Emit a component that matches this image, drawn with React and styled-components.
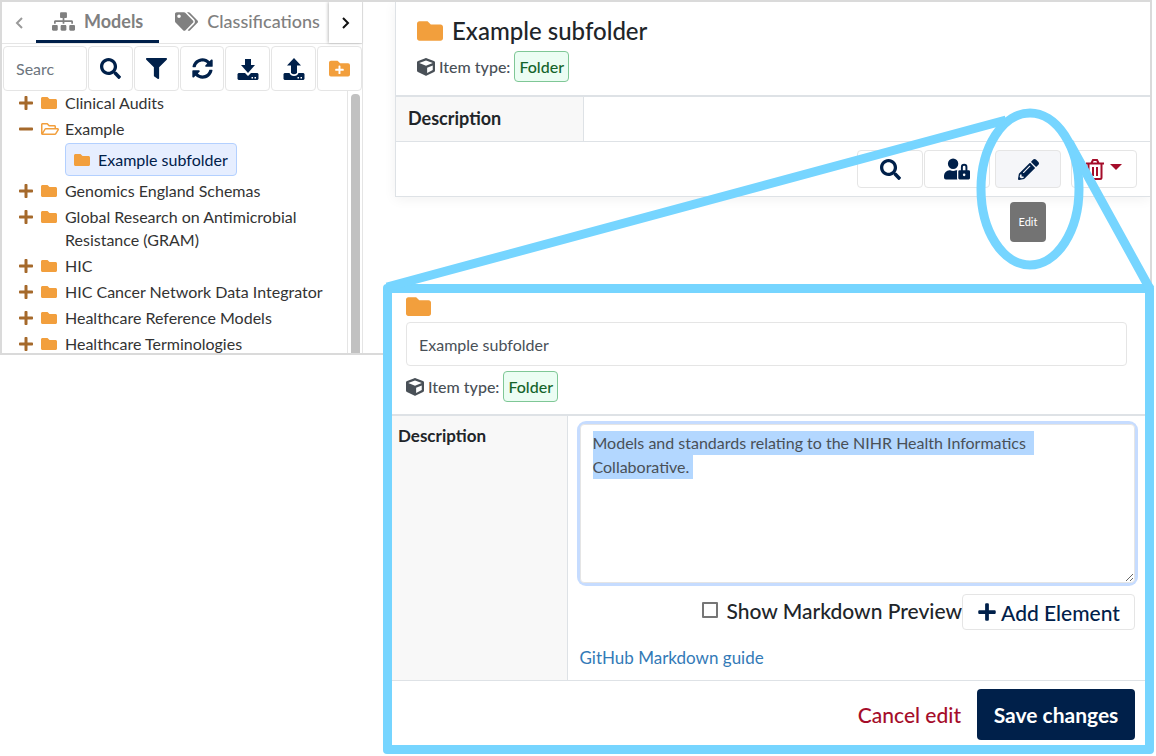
import React from "react";
import styled, { createGlobalStyle, css } from "styled-components";
import {
  FaSitemap, FaTags, FaSearch, FaFilter, FaSyncAlt, FaFolderPlus, FaFolder,
  FaRegFolderOpen, FaCube, FaUserLock, FaPencilAlt, FaPlus, FaMinus,
} from "react-icons/fa";

const c = {
  navy: "#00204a", orange: "#f29f3d", brown: "#a5692b", red: "#a50d2a",
  line: "#dee2e6", soft: "#e5e5e5", sky: "#76d5ff", text: "#333", grey: "#808080",
};

const Global = createGlobalStyle`
  *, *::before, *::after { box-sizing: border-box; }
  body { margin: 0; background: #fff; color: ${c.text}; font: 16px/23px Lato, "Open Sans", sans-serif; }
  button, input, textarea { font: inherit; color: inherit; }
  button { cursor: pointer; padding: 0; }
  h1, h2, p, ul, table { margin: 0; padding: 0; }
  svg { flex: none; }
`;

const Page = styled.main`
  position: relative;
  display: grid;
  grid-template-columns: 383px 1fr;
  grid-template-rows: 284px 71px auto;
  padding-right: 2px;
`;
const Frame = styled.div`
  grid-area: 1 / 1 / 3 / 3;
  display: flex;
  margin-right: 2px;
  border: 2px solid #dadada;
  overflow: hidden;
`;

const Sidebar = styled.aside`
  width: 361px;
  border-right: 1px solid ${c.soft};
  display: flex;
  flex-direction: column;
`;
const Tabs = styled.div`
  display: flex;
  height: 42px;
  border-bottom: 1px solid ${c.soft};
`;
const Pager = styled.button`
  flex: none;
  width: ${(p) => (p.$raised ? 33 : 34)}px;
  margin-left: ${(p) => (p.$raised ? "auto" : 0)};
  border: 0;
  background: #fff;
  display: flex;
  align-items: center;
  justify-content: center;
  box-shadow: ${(p) => (p.$raised ? "-1px 0 3px rgba(0,0,0,.25)" : "none")};
`;
const Tab = styled.button`
  flex: none;
  display: flex;
  align-items: center;
  gap: 9px;
  padding: 0 16px;
  margin-right: ${(p) => (p.$active ? 0 : -16)}px;
  border: 0;
  border-bottom: 3px solid ${(p) => (p.$active ? c.navy : "transparent")};
  background: none;
  color: ${c.grey};
  font-size: 18px;
  font-weight: ${(p) => (p.$active ? 700 : 500)};
`;
const SearchRow = styled.div`
  display: flex;
  gap: 1px;
  padding: 2px 0 0 1px;
`;
const box = css`
  border: 1px solid ${c.soft};
  border-radius: 4px;
  background: #fff;
`;
const SearchInput = styled.input`
  ${box}
  width: 84px;
  padding: 0 31px 0 12px;
  &::placeholder { color: #6c757d; opacity: 1; }
`;
const ToolButton = styled.button`
  ${box}
  flex: 1;
  height: 45px;
  display: flex;
  align-items: center;
  justify-content: center;
  color: ${(p) => (p.$accent ? c.orange : c.navy)};
`;
const TreeArea = styled.div`
  flex: 1;
  min-height: 0;
  display: flex;
`;
const Tree = styled.ul`
  flex: 1;
  list-style: none;
  overflow: hidden;
  border-right: 1px solid ${c.soft};
`;
const Node = styled.li`
  display: flex;
  align-items: flex-start;
  padding-left: ${(p) => (p.$child ? 63 : 16)}px;
  margin-bottom: 3px;
`;
const Toggle = styled.button`
  display: flex;
  align-items: center;
  width: 23px;
  height: 23px;
  border: 0;
  background: none;
  color: ${c.brown};
`;
const NodeIcon = styled.span`
  display: flex;
  align-items: center;
  width: 24px;
  height: 23px;
  color: ${c.orange};
`;
const NodeLabel = styled.span`
  max-width: 264px;
`;
const Selected = styled.span`
  display: flex;
  align-items: center;
  padding: 4px 8px;
  border: 1px solid #b3d0ff;
  border-radius: 4px;
  background: #e6eeff;
  color: ${c.navy};
`;
const Scroll = styled.div`
  width: 14px;
  padding: 3px 2px 0 3px;
  &::before {
    content: "";
    display: block;
    height: 100%;
    border-radius: 4px 4px 0 0;
    background: #c1c1c1;
  }
`;

const Content = styled.section`
  flex: 1;
  padding-left: 32px;
`;
const Card = styled.div`
  border: 1px solid ${c.line};
  border-width: 0 0 1px 1px;
  box-shadow: 0 2px 12px rgba(0, 0, 0, 0.06);
`;
const CardHead = styled.header`
  padding: 14px 21px 0;
  height: 93px;
`;
const Title = styled.h1`
  display: flex;
  align-items: center;
  gap: 9px;
  font-size: 24px;
  line-height: 30px;
  font-weight: 500;
  color: #212529;
  svg { color: ${c.orange}; }
`;
const TypeLine = styled.p`
  display: flex;
  align-items: center;
  gap: 4px;
  margin-top: 5px;
  font-weight: 500;
  color: #495057;
`;
const Badge = styled.span`
  padding: 3px 4px;
  border: 1px solid #7fc796;
  border-radius: 4px;
  background: #ebfdf3;
  color: #14642b;
`;
const Table = styled.table`
  width: 100%;
  border-collapse: collapse;
  border-top: 2px solid ${c.line};
  border-bottom: 1px solid ${c.line};
`;
const HeadCell = styled.th`
  width: ${(p) => p.$width}px;
  padding: ${(p) => p.$pad};
  border-right: 1px solid ${c.line};
  background: #f8f8f8;
  color: #212529;
  font-size: ${(p) => p.$size}px;
  font-weight: 700;
  text-align: left;
  vertical-align: top;
`;
const Cell = styled.td`
  padding: ${(p) => (p.$form ? "8px 10px" : "0")};
  padding-left: 12px;
`;
const Actions = styled.div`
  display: flex;
  justify-content: flex-end;
  gap: 1px;
  padding: 8px 13px;
`;
const Action = styled.button`
  ${box}
  width: 66px;
  height: 38px;
  display: flex;
  align-items: center;
  justify-content: center;
  gap: 6px;
  background: ${(p) => (p.$active ? "#f5f6f9" : "#fff")};
  color: ${(p) => (p.$danger ? c.red : c.navy)};
`;
const ActionWrap = styled.div`
  position: relative;
  margin: 0 9px 0 4px;
`;
const Tooltip = styled.span`
  position: absolute;
  top: 52px;
  left: 15px;
  width: 36px;
  height: 40px;
  border-radius: 4px;
  background: #737373;
  color: #fff;
  font-size: 11px;
  line-height: 40px;
  text-align: center;
`;

const Callout = styled.section`
  grid-area: 2 / 2 / 4 / 3;
  border: 9px solid ${c.sky};
  border-radius: 4px;
  background: #fff;
`;
const FormHead = styled.header`
  padding: 1px 18px 12px 14px;
  > svg { display: block; }
`;
const NameInput = styled.input`
  ${box}
  display: block;
  width: 100%;
  height: 44px;
  margin-top: 3px;
  padding: 0 12px;
  color: #495057;
`;
const Area = styled.div`
  border-radius: 6px;
  box-shadow: 0 0 0 3px #c6dcff;
  display: grid;
  color: #495057;
`;
const Notes = styled.textarea`
  ${box}
  display: block;
  width: 100%;
  height: 159px;
  padding: 6px 40px 6px 12px;
  line-height: 24px;
  outline: 0;
  resize: vertical;
  &::selection { background: #b3d7ff; color: #495057; }
`;
const Options = styled.div`
  display: flex;
  justify-content: flex-end;
  margin-top: 11px;
`;
const Check = styled.label`
  display: flex;
  align-items: center;
  gap: 8px;
  height: 32px;
  color: #212529;
  font-size: 21px;
  font-weight: 500;
`;
const CheckBox = styled.input`
  appearance: none;
  width: 16px;
  height: 16px;
  margin: 0;
  border: 2px solid #767676;
  border-radius: 1px;
`;
const AddButton = styled.button`
  ${box}
  display: flex;
  align-items: center;
  justify-content: center;
  gap: 4px;
  width: 173px;
  height: 36px;
  color: ${c.navy};
  font-size: 21px;
  font-weight: 500;
`;
const Guide = styled.a`
  display: block;
  width: max-content;
  margin: 16px 0 3px;
  color: #337ab7;
  font-size: 17px;
  text-decoration: none;
`;
const Footer = styled.footer`
  display: flex;
  justify-content: flex-end;
  gap: 16px;
  padding: 8px 10px 5px;
`;
const Cancel = styled.button`
  border: 0;
  background: none;
  color: ${c.red};
  font-size: 21px;
  font-weight: 500;
`;
const Save = styled.button`
  width: 158px;
  height: 51px;
  border: 0;
  border-radius: 4px;
  background: ${c.navy};
  color: #fff;
  font-size: 21px;
  font-weight: 700;
`;
const Pointer = styled.svg`
  position: absolute;
  top: 0;
  right: 0;
  pointer-events: none;
`;

const Chevron = ({ flip, color }) => (
  <svg width="10" height="14" viewBox="0 0 10 14" fill="none" stroke={color} strokeWidth="2">
    <path d={flip ? "M8 2 3 7l5 5" : "M2 2l5 5-5 5"} />
  </svg>
);

const Tray = ({ up }) => (
  <svg width="22" height="22" viewBox="0 0 22 22" fill="currentColor">
    <path d={up ? "M11 0l7 7.5h-4V15q-3 2.5-6 0V7.5H4z" : "M8 1h6v6h4l-7 8-7-8h4z"} />
    <path
      fillRule="evenodd"
      d={`${up ? "M1.5 15H6.5q1 3 4.5 3t4.5-3h5" : "M1.5 15H8l3 3 3-3h6.5"}l1 1v5l-1 1h-19l-1-1v-5zM14.5 19v1.5H16V19zM17.500 19v1.500H19V19z`}
    />
  </svg>
);

const Trash = () => (
  <svg width="18" height="21" viewBox="0 0 18 21" fill="none" stroke="currentColor" strokeWidth="2">
    <path d="M0 4.5h18M5.5 4 7 1h4l1.500 3M2.500 5v13.500q0 1.500 1.500 1.500h10q1.500 0 1.500-1.500V5M7 8v9M11 8v9" />
  </svg>
);

const Caret = () => (
  <svg width="12" height="14" viewBox="0 0 12 14" fill="currentColor"><path d="M0 2h12L6 8z" /></svg>
);

const nodes = [
  ["Clinical Audits"],
  ["Example", "open"],
  ["Example subfolder", "selected"],
  ["Genomics England Schemas"],
  ["Global Research on Antimicrobial Resistance (GRAM)"],
  ["HIC"],
  ["HIC Cancer Network Data Integrator"],
  ["Healthcare Reference Models"],
  ["Healthcare Terminologies"],
];

const TreeNode = ({ label, state }) =>
  state === "selected" ? (
    <Node $child>
      <Selected><NodeIcon><FaFolder size={16} /></NodeIcon>{label}</Selected>
    </Node>
  ) : (
    <Node>
      <Toggle aria-label={`${state === "open" ? "Collapse" : "Expand"} ${label}`}>
        {state === "open" ? <FaMinus size={16} /> : <FaPlus size={16} />}
      </Toggle>
      <NodeIcon>{state === "open" ? <FaRegFolderOpen size={18} /> : <FaFolder size={16} />}</NodeIcon>
      <NodeLabel>{label}</NodeLabel>
    </Node>
  );

const ItemType = () => (
  <TypeLine><FaCube size={18} />Item type:<Badge>Folder</Badge></TypeLine>
);

export default function App() {
  const notes = React.useRef(null);
  React.useEffect(() => {
    notes.current.focus();
    notes.current.select();
  }, []);

  return (
    <>
      <Global />
      <Page>
        <Frame>
          <Sidebar>
            <Tabs>
              <Pager aria-label="Previous tabs"><Chevron flip color="#9a9a9a" /></Pager>
              <Tab $active><FaSitemap size={23} />Models</Tab>
              <Tab><FaTags size={23} />Classifications</Tab>
              <Pager $raised aria-label="More tabs"><Chevron color="#111" /></Pager>
            </Tabs>
            <SearchRow>
              <SearchInput aria-label="Search" placeholder="Search" />
              <ToolButton aria-label="Search"><FaSearch size={21} /></ToolButton>
              <ToolButton aria-label="Filter"><FaFilter size={21} /></ToolButton>
              <ToolButton aria-label="Refresh"><FaSyncAlt size={21} /></ToolButton>
              <ToolButton aria-label="Import"><Tray /></ToolButton>
              <ToolButton aria-label="Export"><Tray up /></ToolButton>
              <ToolButton $accent aria-label="Add folder"><FaFolderPlus size={21} /></ToolButton>
            </SearchRow>
            <TreeArea>
              <Tree>
                {nodes.map(([label, state]) => <TreeNode key={label} label={label} state={state} />)}
              </Tree>
              <Scroll />
            </TreeArea>
          </Sidebar>
          <Content>
            <Card>
              <CardHead>
                <Title><FaFolder size={26} />Example subfolder</Title>
                <ItemType />
              </CardHead>
              <Table>
                <tbody>
                  <tr>
                    <HeadCell scope="row" $width={187} $size={18} $pad="10px 12px 11px">Description</HeadCell>
                    <Cell />
                  </tr>
                </tbody>
              </Table>
              <Actions>
                <Action aria-label="Search"><FaSearch size={21} /></Action>
                <Action aria-label="Permissions"><FaUserLock size={26} /></Action>
                <ActionWrap>
                  <Action $active aria-label="Edit" aria-describedby="tip"><FaPencilAlt size={21} /></Action>
                  <Tooltip id="tip" role="tooltip">Edit</Tooltip>
                </ActionWrap>
                <Action $danger aria-label="Delete"><Trash /><Caret /></Action>
              </Actions>
            </Card>
          </Content>
        </Frame>
        <Callout>
          <FormHead>
            <FaFolder size={25} color={c.orange} />
            <NameInput aria-label="Name" defaultValue="Example subfolder" />
            <ItemType />
          </FormHead>
          <Table>
            <tbody>
              <tr>
                <HeadCell scope="row" $width={175} $size={17} $pad="8px 6px">Description</HeadCell>
                <Cell $form>
                  <Area>
                    <Notes
                      ref={notes}
                      aria-label="Description"
                      defaultValue="Models and standards relating to the NIHR Health Informatics Collaborative. "
                    />
                  </Area>
                  <Options>
                    <Check><CheckBox type="checkbox" />Show Markdown Preview</Check>
                    <AddButton><FaPlus size={20} />Add Element</AddButton>
                  </Options>
                  <Guide href="#markdown">GitHub Markdown guide</Guide>
                </Cell>
              </tr>
            </tbody>
          </Table>
          <Footer>
            <Cancel>Cancel edit</Cancel>
            <Save>Save changes</Save>
          </Footer>
        </Callout>
        <Pointer width="772" height="300" viewBox="384 0 772 300" fill="none" stroke={c.sky} strokeWidth="9" aria-hidden="true">
          <ellipse cx="1030" cy="189" rx="49" ry="76" />
          <path d="M387 287 1006 120M1069 142 1150 289" />
        </Pointer>
      </Page>
    </>
  );
}
